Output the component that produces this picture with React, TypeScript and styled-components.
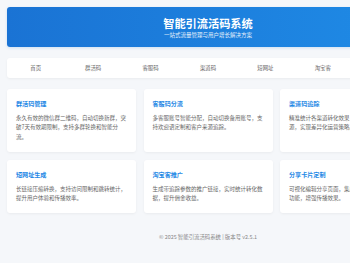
import React from "react";
import styled, { createGlobalStyle } from "styled-components";

const GlobalStyle = createGlobalStyle`
  html, body {
    margin: 0;
    padding: 0;
    overflow: hidden;
    background: #f5f7fa;
  }
  body {
    font-family: "Noto Sans CJK SC", "Noto Sans", sans-serif;
  }
  * { box-sizing: border-box; }
`;

const Page = styled.div`
  width: 416px;
  min-width: 416px;
  padding: 7px 7px 0;
  background: #f5f7fa;
`;

const Header = styled.header`
  height: 40px;
  border-radius: 3px;
  background: linear-gradient(90deg, #1a73d4 0%, #1f8be6 100%);
  box-shadow: 0 1px 3px rgba(25, 118, 210, 0.18);
  display: flex;
  flex-direction: column;
  align-items: center;
  padding-top: 10px;
  color: #fff;
`;

const Title = styled.h1`
  margin: 0;
  font-size: 11.2px;
  line-height: 13px;
  font-weight: 700;
  letter-spacing: 0;
`;

const Subtitle = styled.p`
  margin: 1.5px 0 0;
  font-size: 5.5px;
  line-height: 7px;
  opacity: 0.9;
`;

const Nav = styled.nav`
  margin-top: 11px;
  height: 20px;
  background: #fff;
  border-radius: 3px;
  box-shadow: 0 1px 3px rgba(0, 0, 0, 0.05);
  display: flex;
  align-items: center;
`;

const NavItem = styled.a`
  flex: 1;
  text-align: center;
  font-size: 5.4px;
  color: #666;
  text-decoration: none;
`;

const Grid = styled.section`
  margin-top: 11px;
  display: grid;
  grid-template-columns: repeat(3, 1fr);
  gap: 8px 7.5px;
`;

const Card = styled.div`
  background: #fff;
  border-radius: 3px;
  box-shadow: 0 1px 3px rgba(0, 0, 0, 0.05);
  padding: 10px 9px 10px;
`;

const CardTitle = styled.h3`
  margin: 0;
  font-size: 6.1px;
  line-height: 9px;
  font-weight: 700;
  color: #1e88e5;
`;

const CardDesc = styled.p`
  margin: 6px 0 0;
  font-size: 5.5px;
  line-height: 9.3px;
  color: #666;
`;

const Footer = styled.footer`
  padding: 20px 0;
  text-align: center;
  font-size: 5.4px;
  line-height: 8px;
  color: #888;
`;

const navItems = ["首页", "群活码", "客服码", "渠道码", "短网址", "淘宝客", "分享卡片"];

const features = [
  {
    title: "群活码管理",
    desc: "永久有效的微信群二维码，自动切换新群，突破7天有效期限制，支持多群轮换和智能分流。",
  },
  {
    title: "客服码分流",
    desc: "多客服账号智能分配，自动切换备用账号，支持欢迎语定制和客户来源追踪。",
  },
  {
    title: "渠道码追踪",
    desc: "精准统计各渠道转化效果，多维度分析用户来源，实现差异化运营策略。",
  },
  {
    title: "短网址生成",
    desc: "长链接压缩转换，支持访问限制和跳转统计，提升用户体验和传播效率。",
  },
  {
    title: "淘宝客推广",
    desc: "生成带追踪参数的推广链接，实时统计转化数据，提升佣金收益。",
  },
  {
    title: "分享卡片定制",
    desc: "可视化编辑分享页面，集成多种营销互动组件功能，增强传播效果。",
  },
];

export default function App() {
  return (
    <>
      <GlobalStyle />
      <Page>
        <Header>
          <Title>智能引流活码系统</Title>
          <Subtitle>一站式流量管理与用户增长解决方案</Subtitle>
        </Header>
        <Nav>
          {navItems.map((n) => (
            <NavItem key={n}>{n}</NavItem>
          ))}
        </Nav>
        <Grid>
          {features.map((f) => (
            <Card key={f.title}>
              <CardTitle>{f.title}</CardTitle>
              <CardDesc>{f.desc}</CardDesc>
            </Card>
          ))}
        </Grid>
        <Footer>© 2025 智能引流活码系统 | 版本号 v2.5.1</Footer>
      </Page>
    </>
  );
}
